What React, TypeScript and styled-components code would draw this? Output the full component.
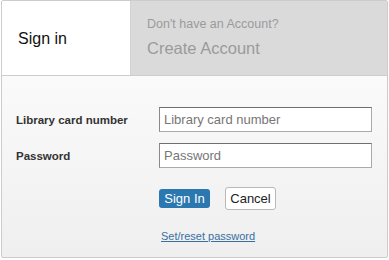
import React from "react";
import styled, { createGlobalStyle } from "styled-components";

const Global = createGlobalStyle`
  html, body { margin: 0; padding: 0; background: #ffffff; }
  body { font-family: "Liberation Sans", Arial, sans-serif; }
  * { box-sizing: border-box; }
`;

const Panel = styled.div`
  margin-left: 1px;
  width: 387px;
  height: 258px;
  border: 1px solid #cccccc;
  border-radius: 2px;
  display: flex;
  flex-direction: column;
  overflow: hidden;
  background: linear-gradient(#ffffff, #efefef);
`;

const Tabs = styled.div`
  display: flex;
  height: 75px;
  border-bottom: 1px solid #cccccc;
  flex-shrink: 0;
`;

const ActiveTab = styled.div`
  width: 128px;
  background: #ffffff;
  display: flex;
  align-items: center;
  padding: 1px 0 0 16px;
  font-size: 16px;
  color: #111111;
`;

const OtherTab = styled.div`
  flex: 1;
  background: #dadada;
  border-left: 1px solid #d2d2d2;
  padding: 15px 0 0 16px;
  color: #9b9b9b;
  display: flex;
  flex-direction: column;
`;

const Hint = styled.div`
  font-size: 12.5px;
  line-height: 16px;
`;

const BigLink = styled.div`
  font-size: 16.5px;
  line-height: 20px;
  margin-top: 6px;
`;

const Form = styled.form`
  flex: 1;
  display: grid;
  grid-template-columns: 143px 213px;
  grid-auto-rows: min-content;
  row-gap: 11px;
  padding: 31px 0 0 14px;
  margin: 0;
`;

const Label = styled.label`
  font-size: 11.5px;
  font-weight: bold;
  color: #333333;
  align-self: center;
`;

const Input = styled.input`
  height: 25px;
  width: 213px;
  border: 1px solid #aaaaaa;
  border-top-color: #6f6f6f;
  border-left-color: #8a8a8a;
  background: #ffffff;
  font-family: "Liberation Sans", Arial, sans-serif;
  font-size: 13px;
  padding: 0 4px;
  margin: 0;
  outline: none;
  &::placeholder { color: #767676; }
`;

const Actions = styled.div`
  grid-column: 2;
  display: flex;
  align-items: center;
  gap: 15px;
  margin-top: 8px;
`;

const Button = styled.button<{ $primary?: boolean }>`
  font-family: "Liberation Sans", Arial, sans-serif;
  font-size: 13px;
  margin: 0;
  cursor: pointer;
  border-radius: 3px;
  height: ${(p) => (p.$primary ? "19px" : "23px")};
  width: 51px;
  padding: 0;
  line-height: 1;
  color: ${(p) => (p.$primary ? "#ffffff" : "#222222")};
  background: ${(p) => (p.$primary ? "#2b77b0" : "#ffffff")};
  border: ${(p) => (p.$primary ? "none" : "1px solid #b9b9b9")};
`;

const ResetRow = styled.div`
  grid-column: 2;
  padding-left: 2px;
  margin-top: 5px;
`;

const ResetLink = styled.a`
  font-size: 11px;
  color: #3a6fa3;
  text-decoration: underline;
`;

export default function App() {
  return (
    <>
      <Global />
      <Panel>
        <Tabs>
          <ActiveTab>Sign in</ActiveTab>
          <OtherTab>
            <Hint>Don't have an Account?</Hint>
            <BigLink>Create Account</BigLink>
          </OtherTab>
        </Tabs>
        <Form onSubmit={(e) => e.preventDefault()}>
          <Label htmlFor="card">Library card number</Label>
          <Input id="card" placeholder="Library card number" />
          <Label htmlFor="pw">Password</Label>
          <Input id="pw" type="password" placeholder="Password" />
          <Actions>
            <Button $primary type="submit">Sign In</Button>
            <Button type="button">Cancel</Button>
          </Actions>
          <ResetRow>
            <ResetLink href="#">Set/reset password</ResetLink>
          </ResetRow>
        </Form>
      </Panel>
    </>
  );
}
